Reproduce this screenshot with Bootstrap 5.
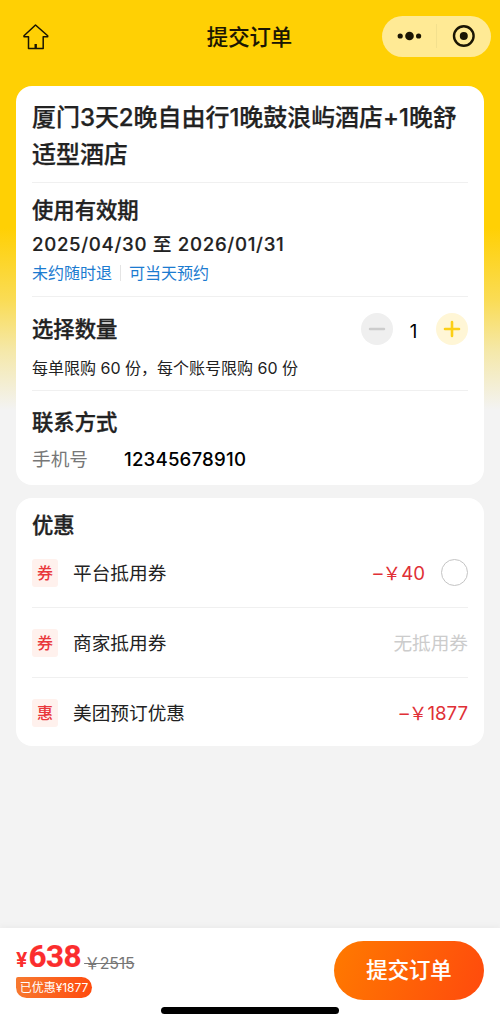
<!DOCTYPE html>
<html lang="zh-CN">
<head>
<meta charset="utf-8">
<meta name="viewport" content="width=device-width, initial-scale=1">
<title>提交订单</title>
<link href="https://cdn.jsdelivr.net/npm/bootstrap@5.3.0/dist/css/bootstrap.min.css" rel="stylesheet">
<style>
body{font-family:Inter,"Noto Sans CJK SC",sans-serif;color:#222;background:linear-gradient(#ffd004 0,#ffd004 228px,#fadc55 300px,#f5e8a8 350px,#f3f3f3 410px) #f3f3f3;height:1024px;overflow:hidden}
.topbar{height:86px;padding:0 9px 12px 22px;color:#1a1503}
.topbar-title{font-size:21.33px;font-weight:500;line-height:32px;-webkit-text-stroke:.15px currentColor}
.side{width:95px}
.capsule{width:109px;height:41px;background:#ffea95;margin-top:-2px}
.capsule .sep{width:1px;height:24px;background:#f3e08e}
.panel{border-radius:16px;background:#fff;margin:0 16px;padding:0 16px}
.sect{border-bottom:1px solid #f0f0f0}
.sect:last-child{border:0}
.s1{height:97px;padding-top:13px}
.s2{height:114px;padding-top:11px}
.s3{height:94px;padding-top:16px}
.s4{height:94px;padding-top:15px}
.prod{font-size:24px;font-weight:500;line-height:37px;margin:0;white-space:nowrap;letter-spacing:-.05px;-webkit-text-stroke:.25px currentColor}
.head{font-size:21.33px;font-weight:500;line-height:32px;margin:0;-webkit-text-stroke:.35px currentColor}
.dates{font-size:18.67px;font-weight:500;line-height:28px;margin-top:5px;letter-spacing:.68px;-webkit-text-stroke:.15px currentColor}
.tags{font-size:16px;line-height:22px;color:#1b7bd0;margin-top:3px}
.tags .vsep{width:1px;height:16px;background:#e4e4e4;margin:0 8px}
.round-btn{width:32px;height:32px;border-radius:50%;background:#efefef}
.round-btn.plus{background:#fff6d6}
.qty{width:43px;font-size:18.67px;line-height:32px;padding-top:3px;padding-right:2px;height:32px;color:#000;font-weight:400}
.note{font-size:16px;line-height:22px;margin-top:12px}
.phone{font-size:18.67px;line-height:28px;margin-top:8px}
.phone .lab{width:92px;color:#777}
.phone .num{color:#000;font-weight:500;letter-spacing:.18px}
.offers{margin-top:13px;height:248px}
.offers .head{padding-top:11px;height:40px}
.offer{height:70px;font-size:18.67px;line-height:28px;border-bottom:1px solid #f0f0f0}
.offer:last-child{border:0}
.offer .txt{padding-top:2px}
.chip{width:26px;height:28px;background:#fff1ed;border-radius:3px;color:#e9373b;font-size:16px;font-weight:500;line-height:28px;margin-right:15px}
.red{color:#e03036}
.none{color:#ccc}
.pick{width:27px;height:27px;border:1.5px solid #c4c4c4;border-radius:50%;margin-left:16px}
.paybar{height:96px;background:#fff;box-shadow:0 -2px 6px rgba(0,0,0,.035);padding:13px 16px 0}
.cur{color:#fb2d2d;font-weight:700;font-size:20px;line-height:30px}
.price{color:#fb2d2d;font-family:Roboto,Inter,sans-serif;font-weight:700;font-size:31.5px;line-height:32px;margin-left:1px;-webkit-text-stroke:.2px currentColor;letter-spacing:-.5px}
.was{font-size:16px;color:#777;line-height:22px;position:relative;top:2px;margin-left:3px;letter-spacing:-.3px}
.saved{width:76px;height:21px;border-radius:2px 11px 11px 11px;background:linear-gradient(100deg,#f77a30,#ff4a0d);color:#fff;font-size:12px;line-height:21px;margin-top:2px}
.submit{width:150px;height:59px;background:linear-gradient(110deg,#ff7a00,#ff4a0d);color:#fff;font-size:21.33px;font-weight:500;-webkit-text-stroke:.15px currentColor}
.homebar{width:178px;height:7px;border-radius:4px;background:#000;left:161px;bottom:10px}
</style>
</head>
<body class="d-flex flex-column">
<header class="topbar d-flex align-items-center justify-content-between flex-shrink-0">
  <div class="side"><svg class="d-block" width="28" height="28" viewBox="0 0 28 28" fill="none" stroke="currentColor" stroke-width="1.5" stroke-linejoin="round"><path d="M13.5 2 2 12.8v1h4.5v11.7h14.7V13.8h4.5v-1z"/><path d="M13.7 25v-4" stroke-width="2.4"/></svg></div>
  <div class="topbar-title">提交订单</div>
  <div class="capsule rounded-pill d-flex align-items-center">
    <svg width="54" height="40" viewBox="0 0 54 40" fill="currentColor"><circle cx="18.2" cy="20" r="2.6"/><circle cx="27.5" cy="20" r="4.3"/><circle cx="36.6" cy="20" r="2.6"/></svg>
    <span class="sep"></span>
    <svg width="54" height="40" viewBox="0 0 54 40"><circle cx="26.8" cy="20" r="9.8" fill="none" stroke="currentColor" stroke-width="2.4"/><circle cx="26.8" cy="20" r="4" fill="currentColor"/></svg>
  </div>
</header>
<main class="flex-grow-1">
  <div class="panel">
    <section class="sect s1"><h1 class="prod">厦门3天2晚自由行1晚鼓浪屿酒店+1晚舒<br>适型酒店</h1></section>
    <section class="sect s2">
      <h2 class="head">使用有效期</h2>
      <div class="dates">2025/04/30 至 2026/01/31</div>
      <div class="tags d-flex align-items-center"><span>未约随时退</span><span class="vsep"></span><span>可当天预约</span></div>
    </section>
    <section class="sect s3">
      <div class="d-flex align-items-center">
        <h2 class="head me-auto">选择数量</h2>
        <div class="round-btn"><svg class="d-block" width="32" height="32"><path d="M9 16h14" stroke="#ccc" stroke-width="2.4" stroke-linecap="round"/></svg></div>
        <div class="qty text-center">1</div>
        <div class="round-btn plus"><svg class="d-block" width="32" height="32"><path d="M9 16h14M16 9v14" stroke="#fccf16" stroke-width="2.6" stroke-linecap="round"/></svg></div>
      </div>
      <div class="note">每单限购 60 份，每个账号限购 60 份</div>
    </section>
    <section class="sect s4">
      <h2 class="head">联系方式</h2>
      <div class="phone d-flex"><span class="lab">手机号</span><span class="num">12345678910</span></div>
    </section>
  </div>
  <div class="panel offers">
    <h2 class="head">优惠</h2>
    <div class="offer d-flex align-items-center"><span class="chip text-center">券</span><span class="txt me-auto">平台抵用券</span><span class="txt red">–￥40</span><span class="pick"></span></div>
    <div class="offer d-flex align-items-center"><span class="chip text-center">券</span><span class="txt me-auto">商家抵用券</span><span class="txt none">无抵用券</span></div>
    <div class="offer d-flex align-items-center"><span class="chip text-center">惠</span><span class="txt me-auto">美团预订优惠</span><span class="txt red">–￥1877</span></div>
  </div>
</main>
<footer class="paybar position-relative d-flex justify-content-between flex-shrink-0">
  <div>
    <div class="d-flex align-items-baseline"><span class="cur">¥</span><span class="price">638</span><s class="was">￥2515</s></div>
    <div class="saved text-center">已优惠¥1877</div>
  </div>
  <button type="button" class="btn submit rounded-pill border-0">提交订单</button>
  <div class="homebar position-absolute"></div>
</footer>
<script src="https://cdn.jsdelivr.net/npm/bootstrap@5.3.0/dist/js/bootstrap.bundle.min.js"></script>
</body>
</html>
